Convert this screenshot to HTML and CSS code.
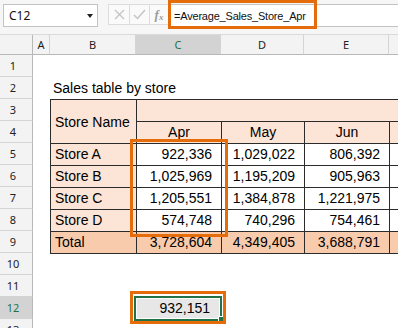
FILE: index.html
```html
<!DOCTYPE html>
<html>
<head>
<meta charset="utf-8">
<link rel="stylesheet" href="styles.css">
</head>
<body>
<div class="app">
  <div class="fbar">
    <div class="namebox">
      <span class="nb-text">C12</span>
      <svg class="nb-arrow" width="6" height="4" viewBox="0 0 6 4"><path d="M0 0H6L3 4Z" fill="#222"/></svg>
    </div>
    <div class="fbtns">
      <span class="fbtn fb-x"><svg width="11" height="11" viewBox="0 0 11 11"><path d="M1 1L10 10M10 1L1 10" stroke="#c4c4c4" stroke-width="1.3" fill="none"/></svg></span>
      <span class="fbtn fb-ok"><svg width="13" height="11" viewBox="0 0 13 11"><path d="M1 6L4.5 9.5L12 1" stroke="#c4c4c4" stroke-width="1.5" fill="none"/></svg></span>
      <span class="fbtn fb-fx"><span class="fx-f">f</span><span class="fx-x">x</span></span>
    </div>
    <div class="finput">
      <span class="ftext">=Average_Sales_Store_Apr</span>
      <span class="hl hl-formula"></span>
    </div>
  </div>

  <div class="sheet">
    <div class="ch corner"></div>
    <div class="ch">A</div>
    <div class="ch">B</div>
    <div class="ch sel">C</div>
    <div class="ch">D</div>
    <div class="ch">E</div>
    <div class="ch"></div>

    <div class="rh">1</div>
    <div class="c"></div><div class="c"></div><div class="c"></div><div class="c"></div><div class="c"></div><div class="c"></div>

    <div class="rh">2</div>
    <div class="c"></div>
    <div class="c title">Sales table by store</div>
    <div class="c"></div><div class="c"></div><div class="c"></div><div class="c"></div>

    <div class="rh">3</div>
    <div class="c"></div>
    <div class="c t hd lbl mid span-r2">Store Name</div>
    <div class="c t hd span-c4"></div>

    <div class="rh">4</div>
    <div class="c"></div>
    <div class="c t hd ctr">Apr</div>
    <div class="c t hd ctr">May</div>
    <div class="c t hd ctr">Jun</div>
    <div class="c t hd"></div>

    <div class="rh">5</div>
    <div class="c"></div>
    <div class="c t hd lbl">Store A</div>
    <div class="c t num anchor">922,336<span class="hl hl-range"></span></div>
    <div class="c t num">1,029,022</div>
    <div class="c t num">806,392</div>
    <div class="c t"></div>

    <div class="rh">6</div>
    <div class="c"></div>
    <div class="c t hd lbl">Store B</div>
    <div class="c t num">1,025,969</div>
    <div class="c t num">1,195,209</div>
    <div class="c t num">905,963</div>
    <div class="c t"></div>

    <div class="rh">7</div>
    <div class="c"></div>
    <div class="c t hd lbl">Store C</div>
    <div class="c t num">1,205,551</div>
    <div class="c t num">1,384,878</div>
    <div class="c t num">1,221,975</div>
    <div class="c t"></div>

    <div class="rh">8</div>
    <div class="c"></div>
    <div class="c t hd lbl">Store D</div>
    <div class="c t num">574,748</div>
    <div class="c t num">740,296</div>
    <div class="c t num">754,461</div>
    <div class="c t"></div>

    <div class="rh">9</div>
    <div class="c"></div>
    <div class="c t tot lbl">Total</div>
    <div class="c t tot num">3,728,604</div>
    <div class="c t tot num">4,349,405</div>
    <div class="c t tot num">3,688,791</div>
    <div class="c t tot"></div>

    <div class="rh">10</div>
    <div class="c"></div><div class="c"></div><div class="c"></div><div class="c"></div><div class="c"></div><div class="c"></div>

    <div class="rh">11</div>
    <div class="c"></div><div class="c"></div><div class="c"></div><div class="c"></div><div class="c"></div><div class="c"></div>

    <div class="rh sel">12</div>
    <div class="c"></div>
    <div class="c"></div>
    <div class="c num active anchor">932,151<span class="selbox"></span><span class="handle"></span><span class="hl hl-cell"></span></div>
    <div class="c"></div><div class="c"></div><div class="c"></div>

    <div class="rh">13</div>
    <div class="c"></div><div class="c"></div><div class="c"></div><div class="c"></div><div class="c"></div><div class="c"></div>
  </div>
</div>
</body>
</html>
```

FILE: styles.css
```css
html, body {
  margin: 0;
  padding: 0;
  background: #ffffff;
  overflow: hidden;
}

.app {
  width: 398px;
  height: 328px;
  overflow: hidden;
  background: #ffffff;
}

/* ---------- formula bar ---------- */
.fbar {
  height: 35px;
  box-sizing: border-box;
  display: flex;
  align-items: flex-start;
  padding: 4px 0 0 3px;
  background: #f6f6f6;
  border-bottom: 1px solid #dadada;
}

.namebox {
  width: 95px;
  height: 23px;
  box-sizing: border-box;
  border: 1px solid #c3c3c3;
  background: #ffffff;
  display: flex;
  align-items: center;
  justify-content: space-between;
  padding: 0 4px 0 5px;
}

.nb-text {
  font-family: "Noto Sans", "Open Sans", sans-serif;
  font-size: 12px;
  color: #111;
}

.fbtns {
  margin-left: 10px;
  height: 21px;
  box-sizing: border-box;
  display: flex;
  border: 1px solid #dcdcdc;
  border-right: none;
  background: #fafafa;
}

.fbtn {
  height: 19px;
  display: flex;
  align-items: center;
  justify-content: center;
  border-right: 1px solid #dcdcdc;
  box-sizing: border-box;
}

.fb-x { width: 21px; }
.fb-ok { width: 20px; }
.fb-fx {
  width: 18px;
  border-right: none;
  font-family: "Liberation Serif", "DejaVu Serif", serif;
  font-style: italic;
  color: #9a9a9a;
  font-weight: bold;
}

.fx-f { font-size: 13px; }
.fx-x { font-size: 9px; margin-top: 4px; }

.finput {
  flex: 1;
  height: 23px;
  box-sizing: border-box;
  border: 1px solid #c3c3c3;
  border-right: none;
  background: #ffffff;
  position: relative;
  display: flex;
  align-items: center;
  padding-left: 5px;
}

.ftext {
  font-family: "Liberation Sans", Arial, sans-serif;
  font-size: 11px;
  letter-spacing: -0.2px;
  color: #111;
  white-space: nowrap;
}

/* ---------- orange highlight boxes ---------- */
.hl {
  position: absolute;
  box-sizing: border-box;
  border: 3px solid #e46c0a;
  pointer-events: none;
}

.hl-formula {
  left: -1px;
  top: -5px;
  width: 149px;
  height: 29px;
}

.hl-range {
  left: -7px;
  top: -5px;
  width: 98px;
  height: 98px;
}

.hl-cell {
  left: -6px;
  top: -6px;
  width: 96px;
  height: 33px;
}

/* ---------- sheet grid ---------- */
.sheet {
  display: grid;
  grid-template-columns: 33px 17px 86px 85px 83px 85px 80px;
  grid-template-rows: 20px;
  grid-auto-rows: 22px;
}

.ch {
  background: #f3f3f3;
  border-right: 1px solid #d4d4d4;
  border-bottom: 1px solid #b8b8b8;
  box-sizing: border-box;
  display: flex;
  align-items: center;
  justify-content: center;
  font-family: "Noto Sans", "Open Sans", sans-serif;
  font-size: 11px;
  color: #222;
}

.ch.corner {
  border-right: 1px solid #b8b8b8;
}

.ch.sel {
  background: #d3d3d3;
  color: #217346;
}

.rh {
  background: #f3f3f3;
  border-right: 1px solid #b8b8b8;
  border-bottom: 1px solid #d4d4d4;
  box-sizing: border-box;
  display: flex;
  align-items: center;
  justify-content: center;
  padding-right: 6px;
  font-family: "Noto Sans", "Open Sans", sans-serif;
  font-size: 11px;
  color: #222;
}

.rh.sel {
  background: #d3d3d3;
  color: #217346;
}

.c {
  box-sizing: border-box;
  display: flex;
  align-items: flex-end;
  padding: 0 0 3px 0;
  font-family: "Liberation Sans", Arial, sans-serif;
  font-size: 14px;
  line-height: 16px;
  color: #000;
  white-space: nowrap;
}

.title {
  padding-left: 3px;
  overflow: visible;
}

.t {
  border-left: 1px solid #2b2b2b;
  border-top: 1px solid #2b2b2b;
}

.hd {
  background: #fce4d6;
}

.tot {
  background: #f8cbad;
  border-bottom: 1px solid #2b2b2b;
  margin-bottom: -1px;
}

.lbl {
  padding-left: 4px;
}

.mid {
  align-items: center;
  padding-bottom: 0;
}

.ctr {
  justify-content: center;
}

.num {
  justify-content: flex-end;
  padding-right: 9px;
}

.span-r2 {
  grid-row: span 2;
}

.span-c4 {
  grid-column: span 4;
}

.anchor {
  position: relative;
}

/* ---------- active cell C12 ---------- */
.active {
  background: #e7e7e7;
  padding-right: 11px;
}

.selbox {
  position: absolute;
  left: -2px;
  top: -1px;
  right: -1px;
  bottom: -2px;
  border: 2px solid #217346;
  box-shadow: inset 0 0 0 1px #ffffff;
  pointer-events: none;
}

.handle {
  position: absolute;
  right: -3px;
  bottom: -3px;
  width: 5px;
  height: 5px;
  background: #217346;
  border-left: 1px solid #ffffff;
  border-top: 1px solid #ffffff;
}
```
